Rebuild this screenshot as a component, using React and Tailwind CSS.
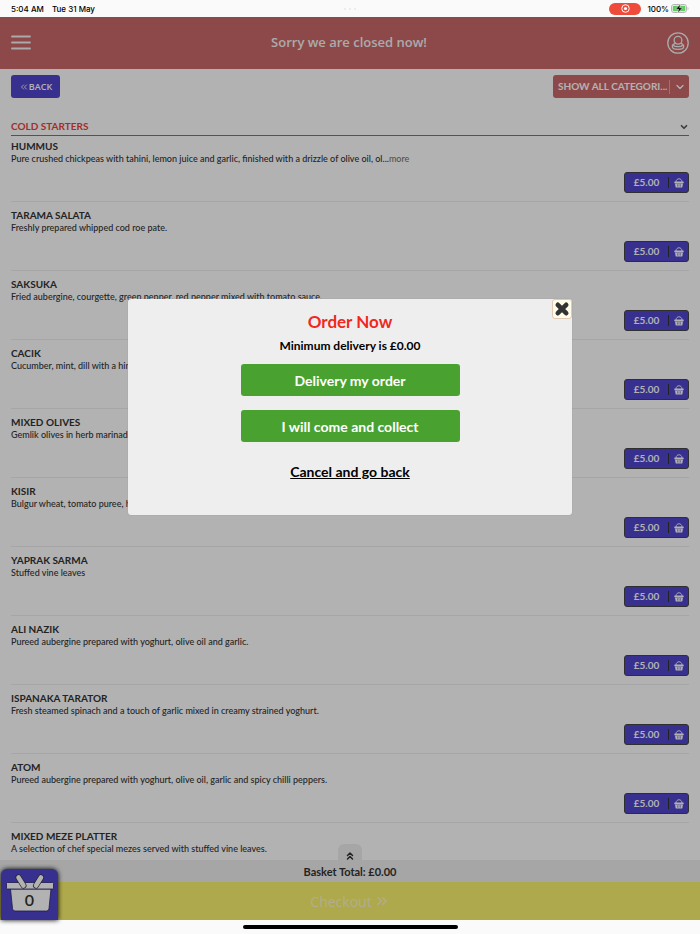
import { ChevronDown, ChevronsLeft, ChevronsRight, ChevronsUp } from 'lucide-react'

const ITEMS = [
  {
    name: 'HUMMUS',
    desc: 'Pure crushed chickpeas with tahini, lemon juice and garlic, finished with a drizzle of olive oil, ol...',
    price: '£5.00',
    more: true,
  },
  { name: 'TARAMA SALATA', desc: 'Freshly prepared whipped cod roe pate.', price: '£5.00' },
  { name: 'SAKSUKA', desc: 'Fried aubergine, courgette, green pepper, red pepper mixed with tomato sauce.', price: '£5.00' },
  { name: 'CACIK', desc: 'Cucumber, mint, dill with a hint of garlic in creamy strained yoghurt.', price: '£5.00' },
  { name: 'MIXED OLIVES', desc: 'Gemlik olives in herb marinade.', price: '£5.00' },
  { name: 'KISIR', desc: 'Bulgur wheat, tomato puree, herbs and spices.', price: '£5.00' },
  { name: 'YAPRAK SARMA', desc: 'Stuffed vine leaves', price: '£5.00' },
  { name: 'ALI NAZIK', desc: 'Pureed aubergine prepared with yoghurt, olive oil and garlic.', price: '£5.00' },
  { name: 'ISPANAKA TARATOR', desc: 'Fresh steamed spinach and a touch of garlic mixed in creamy strained yoghurt.', price: '£5.00' },
  { name: 'ATOM', desc: 'Pureed aubergine prepared with yoghurt, olive oil, garlic and spicy chilli peppers.', price: '£5.00' },
  { name: 'MIXED MEZE PLATTER', desc: 'A selection of chef special mezes served with stuffed vine leaves.' },
]

export default function App() {
  return (
    <div className="flex h-screen flex-col overflow-hidden bg-[#fafafa] font-['Lato',sans-serif] text-[#333]">
      <StatusBar />
      <div className="relative flex min-h-0 flex-1 flex-col bg-white">
        <Header />
        <main className="min-h-0 flex-1 overflow-hidden px-[11px] pt-[6px]">
          <Toolbar />
          <Section title="COLD STARTERS" items={ITEMS} />
        </main>
        <Basket />
        <OrderDialog />
      </div>
      <div className="flex h-[14px] shrink-0 items-center justify-center">
        <div className="h-1 w-[215px] rounded-full bg-black" />
      </div>
    </div>
  )
}

function StatusBar() {
  return (
    <div className="flex h-[17px] shrink-0 items-center justify-between px-[11px] font-['Inter',sans-serif] text-[8px] font-medium text-black">
      <div className="flex flex-1 gap-2">
        <span>5:04 AM</span>
        <span>Tue 31 May</span>
      </div>
      <div className="flex gap-[3px]">
        <span className="size-[2px] rounded-full bg-[#e8e8e8]" />
        <span className="size-[2px] rounded-full bg-[#e8e8e8]" />
        <span className="size-[2px] rounded-full bg-[#e8e8e8]" />
      </div>
      <div className="flex flex-1 items-center justify-end">
        <span className="mr-[6px] flex h-3 w-8 items-center justify-center rounded-full bg-[#ee4b3a]">
          <svg viewBox="0 0 10 10" className="size-[9px]" fill="none" stroke="white">
            <circle cx="5" cy="5" r="4.2" strokeWidth="1.1" />
            <circle cx="5" cy="5" r="1.8" fill="white" stroke="none" />
          </svg>
        </span>
        <span>100%</span>
        <svg viewBox="0 0 18 9" className="ml-[2px] h-[9px] w-[18px]">
          <rect x="0.5" y="0.5" width="15" height="8" rx="2.4" fill="none" stroke="#b5b5b5" />
          <rect x="1.7" y="1.7" width="12.6" height="5.6" rx="1.3" fill="#62cb62" />
          <path d="M16.6 3v3c1.2-.5 1.2-2.5 0-3z" fill="#b5b5b5" />
          <path d="M9.6 0 4.6 5.2h3L6.6 9l5-5.2h-3z" fill="black" stroke="#fafafa" strokeWidth="0.5" />
        </svg>
      </div>
    </div>
  )
}

function Header() {
  return (
    <header className="flex h-[52px] shrink-0 items-center justify-between bg-[#cb6769] px-[11px] text-[#f4f4f4]">
      <button type="button" aria-label="Menu">
        <svg viewBox="0 0 20 16" className="h-4 w-5" stroke="currentColor" strokeWidth="1.8" strokeLinecap="round">
          <path d="M1 1.500h18M1 7.500h18M1 13.500h18" />
        </svg>
      </button>
      <h1 className="font-['Open_Sans',sans-serif] text-[13px] font-semibold">Sorry we are closed now!</h1>
      <button type="button" aria-label="Account">
        <svg viewBox="0 0 22 22" className="size-[22px]" fill="none" stroke="currentColor" strokeWidth="1.3">
          <circle cx="11" cy="11" r="10.2" />
          <circle cx="11" cy="8.3" r="3.9" />
          <path d="M8 11.300c-1.800.7-2.700 1.900-2.700 3.200 0 1.700 2.500 2.900 5.700 2.900s5.700-1.200 5.700-2.900c0-1.300-.9-2.500-2.700-3.200" />
          <path d="M6.200 13.200c1.800 2 7.800 2 9.600 0" />
        </svg>
      </button>
    </header>
  )
}

function Toolbar() {
  return (
    <div className="flex items-center justify-between">
      <button
        type="button"
        className="flex h-[23px] w-[49px] items-center justify-center rounded-[3px] bg-[#4f45cc] font-['Open_Sans',sans-serif] text-[9px] font-semibold text-white"
      >
        <ChevronsLeft className="size-[10px]" strokeWidth={2} />
        BACK
      </button>
      <button
        type="button"
        className="flex h-[23px] w-[136px] items-center rounded-[3px] bg-[#cb6769] pl-[5px] text-[10px] font-bold text-white"
      >
        <span className="flex-1 text-left whitespace-nowrap">SHOW ALL CATEGORI...</span>
        <span className="flex h-[14px] w-5 items-center justify-center border-l border-white/40">
          <ChevronDown className="size-3" strokeWidth={2.5} />
        </span>
      </button>
    </div>
  )
}

function Section({ title, items }) {
  return (
    <section className="mt-[21px]">
      <div className="flex h-[17px] items-start justify-between border-b border-[#777]">
        <h2 className="text-[10px] leading-[14px] font-bold text-[#e84340]">{title}</h2>
        <ChevronDown className="mt-[3px] size-[10px] text-[#555]" strokeWidth={4} />
      </div>
      <ul>
        {items.map((item) => (
          <MenuItem key={item.name} {...item} />
        ))}
      </ul>
    </section>
  )
}

function MenuItem({ name, desc, price, more }) {
  return (
    <li className="border-b border-[#eee] pt-[6px] pb-2 first:pt-[3px]">
      <h3 className="text-[10px] leading-[14px] font-bold">{name}</h3>
      <p className="text-[9px] leading-[12px] font-medium whitespace-nowrap">
        {desc}
        {more && <a href="#more" className="text-[#777]">more</a>}
      </p>
      {price && (
        <div className="mt-[7px] flex justify-end">
          <button
            type="button"
            aria-label={`Add ${name}, ${price}`}
            className="flex h-[21px] w-[65px] items-center rounded-[3px] border border-[#444] bg-[#4f45cc] text-[10px] font-bold text-white"
          >
            <span className="flex-1 text-center">{price}</span>
            <span className="flex h-[11px] w-5 items-center justify-center border-l border-[#333]">
              <BasketIcon />
            </span>
          </button>
        </div>
      )}
    </li>
  )
}

function BasketIcon() {
  return (
    <svg viewBox="0 0 10 10" className="size-[10px]" fill="currentColor">
      <path d="M2 4c0-4.300 6-4.300 6 0" fill="none" stroke="currentColor" strokeWidth="0.9" />
      <rect x="0.300" y="3.600" width="9.400" height="1.700" rx="0.500" />
      <path d="M1 5.600h8l-.6 3.300q-.1.600-.7.600H2.300q-.6 0-.7-.6z" />
      <path d="M3.500 6.200v2.400M5 6.200v2.400M6.500 6.200v2.400" stroke="#4f45cc" strokeWidth="0.500" />
    </svg>
  )
}

function Basket() {
  return (
    <footer className="relative shrink-0">
      <button
        type="button"
        aria-label="Show basket"
        className="absolute -top-4 left-1/2 flex h-4 w-6 -translate-x-1/2 items-center justify-center rounded-t-md bg-[#eee] pt-2"
      >
        <ChevronsUp className="size-[12px]" strokeWidth={3} />
      </button>
      <p className="h-[22px] bg-[#eee] text-center text-[11px] leading-[23px] font-bold">Basket Total: £0.00</p>
      <button
        type="button"
        className="flex h-[38px] w-full items-center justify-center bg-[#faf36e] font-['Open_Sans',sans-serif] text-[14px] font-medium text-[#fff8c8]"
      >
        Checkout
        <ChevronsRight className="ml-[2px] size-4" strokeWidth={2} />
      </button>
      <button
        type="button"
        aria-label="Basket, 0 items"
        className="absolute bottom-0 left-px h-[51px] w-[57px] rounded-t-md bg-[#4f45cc] shadow-[0_0_5px_#000]"
      >
        <svg viewBox="0 0 57 51" className="h-[51px] w-[57px]">
          <g fill="white" stroke="#2b2570" strokeWidth="0.8">
            <path d="M9.500 20h40.500l-2 19.500q-.3 2.500-2.500 2.500H14q-2.200 0-2.500-2.500z" />
            <rect x="5.500" y="13.500" width="47" height="6.500" rx="0.800" />
          </g>
          <g fill="none" strokeLinecap="round">
            <path d="M17.500 8.500 22.500 16.500M40 8.500 35 16.500" stroke="#333" strokeWidth="6" />
            <path d="M17.500 8.500 22.500 16.500M40 8.500 35 16.500" stroke="white" strokeWidth="4.600" />
          </g>
          <text x="28.500" y="37" textAnchor="middle" fontSize="16" fontWeight="600" fill="#333">0</text>
        </svg>
      </button>
    </footer>
  )
}

function OrderDialog() {
  return (
    <div className="absolute inset-0 z-10 flex items-start justify-center bg-black/30 pt-[282px]">
      <div
        role="dialog"
        aria-modal="true"
        aria-labelledby="order-title"
        className="relative flex w-[444px] max-w-full flex-col items-center rounded-[3px] bg-[#eee] pt-3 pb-[33px] text-black shadow-[0_0_1px_#888]"
      >
        <button
          type="button"
          aria-label="Close"
          className="absolute top-0 right-0 flex size-5 items-center justify-center rounded-[3px] border border-[#e3c9b4] bg-[#fffde8]"
        >
          <svg viewBox="0 0 16 16" className="size-4">
            <path d="M3.800 3.800 12.200 12.200M12.200 3.800 3.800 12.200" stroke="#333" strokeWidth="4.600" strokeLinecap="round" />
          </svg>
        </button>
        <h2 id="order-title" className="text-[17px] leading-[22px] font-bold text-[#f0281e]">Order Now</h2>
        <p className="mt-1 text-[12px] leading-[18px] font-bold">Minimum delivery is £0.00</p>
        <button type="button" className="mt-[9px] h-8 w-[219px] rounded-[3px] bg-[#49a22f] text-[14px] font-bold text-white">
          Delivery my order
        </button>
        <button type="button" className="mt-[14px] h-8 w-[219px] rounded-[3px] bg-[#49a22f] text-[14px] font-bold text-white">
          I will come and collect
        </button>
        <a href="#menu" className="mt-5 text-[14px] leading-[20px] font-bold underline">Cancel and go back</a>
      </div>
    </div>
  )
}
